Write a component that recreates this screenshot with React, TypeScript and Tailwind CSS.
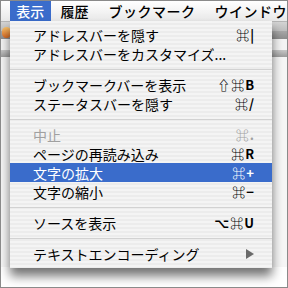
import React from 'react';

type Item =
  | { sep: true }
  | { label: string; key?: string; disabled?: boolean; active?: boolean; submenu?: boolean; sep?: false };

const items: Item[] = [
  { label: 'アドレスバーを隠す', key: '⌘|' },
  { label: 'アドレスバーをカスタマイズ...' },
  { sep: true },
  { label: 'ブックマークバーを表示', key: '⇧⌘B' },
  { label: 'ステータスバーを隠す', key: '⌘/' },
  { sep: true },
  { label: '中止', key: '⌘.', disabled: true },
  { label: 'ページの再読み込み', key: '⌘R' },
  { label: '文字の拡大', key: '⌘+', active: true },
  { label: '文字の縮小', key: '⌘−' },
  { sep: true },
  { label: 'ソースを表示', key: '⌥⌘U' },
  { sep: true },
  { label: 'テキストエンコーディング', submenu: true },
];

const font = { fontFamily: '"Noto Sans CJK JP", "DejaVu Sans", sans-serif' };

export default function App() {
  return (
    <div
      className="relative w-[288px] h-[288px] overflow-hidden border border-[#8a8a8a] bg-white"
      style={font}
    >
      {/* menu bar */}
      <div className="flex items-stretch h-[21px] bg-gradient-to-b from-white to-[#e9e9e9] border-b border-[#b5b5b5] text-[14px] text-black font-medium leading-none whitespace-nowrap">
        <div className="ml-[9px] w-[47px] flex items-center justify-center bg-[#3a6ccb] text-white">表示</div>
        <div className="ml-[10px] flex items-center">履歴</div>
        <div className="ml-[20px] flex items-center tracking-[0.5px]">ブックマーク</div>
        <div className="ml-[19px] flex items-center tracking-[0.5px]">ウインドウ</div>
      </div>

      {/* window behind */}
      <div className="flex flex-col">
        <div className="h-[9px] bg-gradient-to-b from-[#d4d4d4] to-[#bdbdbd]" />
        <div className="h-[8px] bg-gradient-to-b from-[#a8a8a8] to-[#8e8e8e]" />
        <div className="h-[11px] bg-[#f4f4f4]" />
        <div className="h-[7px] bg-gradient-to-b from-[#c8c8c8] to-[#9c9c9c]" />
        <div className="h-[210px] bg-[#f6f6f6]" />
      </div>
      <div className="absolute left-[1px] top-[26px] w-[9px] h-[11px] rounded-full bg-gradient-to-b from-[#f7c26a] to-[#d9681e]" />

      {/* menu */}
      <div className="absolute left-[9px] top-[20px] w-[262px] pt-[4px] pb-[5px] bg-[repeating-linear-gradient(to_bottom,#f4f4f4_0px,#f4f4f4_2px,#ececec_2px,#ececec_4px)] shadow-[0_8px_10px_rgba(0,0,0,0.55)] text-[14px] leading-none">
        {items.map((it, i) =>
          it.sep ? (
            <div key={i} className="h-[12px] flex items-center">
              <div className="w-full h-px bg-[#d2d2d2]" />
            </div>
          ) : (
            <div
              key={i}
              className={`h-[19px] flex items-center pl-[23px] pr-[17px] ${
                it.active ? 'bg-[#3a6ccb] text-white' : it.disabled ? 'text-[#a0a0a0]' : 'text-black'
              }`}
            >
              <span className="flex-1 whitespace-nowrap">{it.label}</span>
              {it.key && <span className="text-[13px] font-semibold tracking-[1px]">{it.key}</span>}
              {it.submenu && (
                <svg width="8" height="10" viewBox="0 0 8 10" className="mr-[1px]">
                  <path d="M0 0 L8 5 L0 10 Z" fill="#6a6a6a" />
                </svg>
              )}
            </div>
          )
        )}
      </div>
    </div>
  );
}
